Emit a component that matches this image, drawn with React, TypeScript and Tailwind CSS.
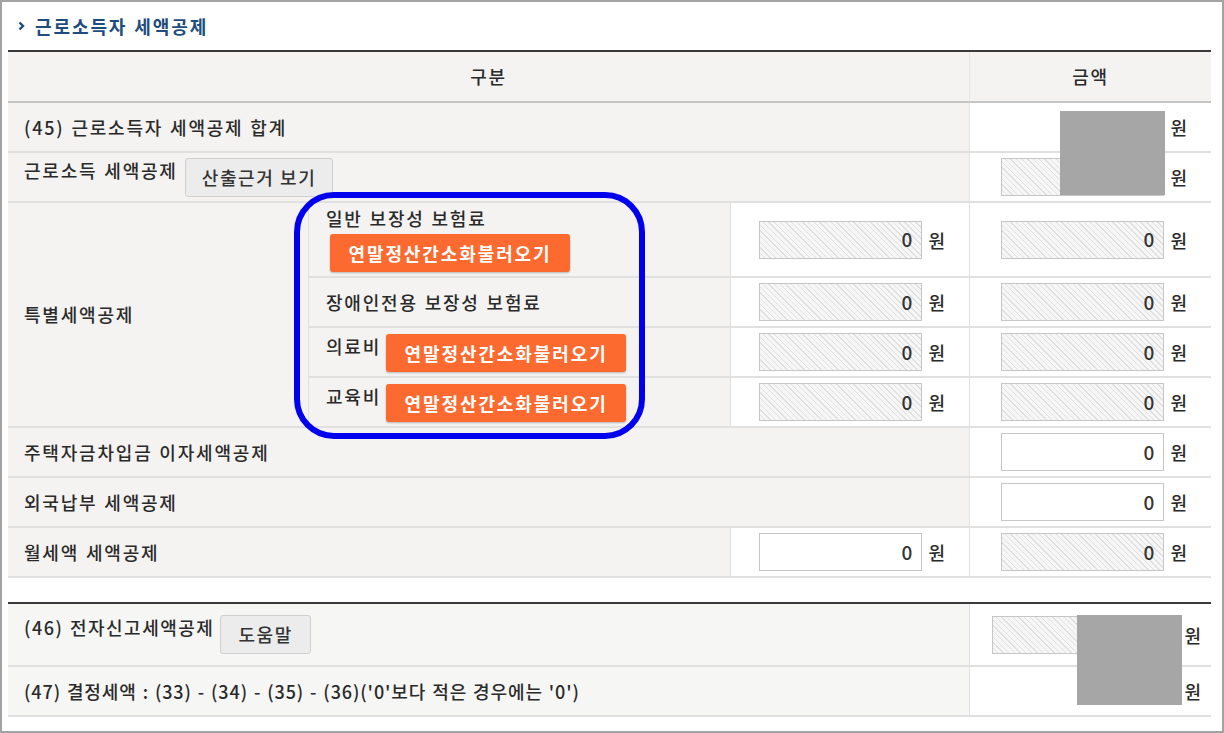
import React from "react";

const hatch =
  "bg-[image:repeating-linear-gradient(45deg,#f6f6f6_0px,#f6f6f6_3px,#e0e0e0_3px,#e0e0e0_4px)]";

function Amount({ hatched, value = "0", wide }: { hatched?: boolean; value?: string; wide?: boolean }) {
  return (
    <div
      className={`flex h-[38px] items-center justify-end border border-[#c6c6c6] pr-[9px] text-[19px] tracking-normal text-[#333] ${wide ? "w-[176px]" : "w-[163px]"} ${hatched ? hatch : "bg-white"}`}
    >
      {value}
    </div>
  );
}

function Won() {
  return <span className="text-[18px] leading-[24px] tracking-normal">원</span>;
}

function OrangeButton({ className = "" }: { className?: string }) {
  return (
    <button
      className={`flex h-[38px] w-[240px] shrink-0 items-center justify-center rounded-[3px] bg-[#fc6a2f] text-[18px] font-bold tracking-[1.9px] text-white shadow-[0_1px_2px_rgba(0,0,0,0.25)] ${className}`}
    >
      연말정산간소화불러오기
    </button>
  );
}

function GrayButton({ label, className = "" }: { label: string; className?: string }) {
  return (
    <button
      className={`flex h-[39px] shrink-0 items-center justify-center rounded-[3px] border border-[#cfcfcf] bg-[#ececec] px-[16px] text-[18px] tracking-[1.6px] text-[#333] ${className}`}
    >
      {label}
    </button>
  );
}

export default function App() {
  const label = "border-b-2 border-[#e0e0e0] bg-[#f4f3f1] pl-[16px]";
  const cell = "border-b-2 border-l border-[#e0e0e0]";
  const amountCell = "flex items-center justify-end gap-[6px] pr-[24px] bg-white";

  return (
    <div className="relative h-[733px] w-[1224px] overflow-hidden border-2 border-[#a3a3a3] bg-white font-['Noto_Sans_CJK_KR',sans-serif] text-[18px] font-medium tracking-[1.8px] text-[#2a2a2a] [word-spacing:1px]">
      {/* title */}
      <div className="flex h-[48px] items-center gap-[10px] pl-[16px]">
        <svg width="7" height="10" viewBox="0 0 7 10">
          <polyline points="1.5,1.5 5,5 1.5,8.5" fill="none" stroke="#1f4c7e" strokeWidth="2.4" />
        </svg>
        <h2 className="text-[18px] font-bold tracking-[1.9px] text-[#1f4c7e]">근로소득자 세액공제</h2>
      </div>

      <div className="ml-[6px] w-[1203px]">
        {/* main table */}
        <div className="grid grid-cols-[300px_422px_239px_242px] border-t-2 border-[#3a3a3a]">
          <div className="col-span-3 flex h-[51px] items-center justify-center border-b-2 border-[#c4c4c4] bg-[#f4f3f1]">
            구분
          </div>
          <div className="flex h-[51px] items-center justify-center border-b-2 border-l border-b-[#c4c4c4] border-l-[#e6e6e6] bg-[#f4f3f1]">
            금액
          </div>

          {/* (45) */}
          <div className={`col-span-3 flex h-[50px] items-center ${label}`}>(45) 근로소득자 세액공제 합계</div>
          <div className={`${cell} ${amountCell}`}>
            <Won />
          </div>

          {/* 근로소득 세액공제 */}
          <div className={`col-span-3 flex h-[50px] items-start pt-[5px] ${label}`}>
            <span className="leading-[24px]">근로소득 세액공제</span>
            <GrayButton label="산출근거 보기" className="ml-[7px]" />
          </div>
          <div className={`${cell} ${amountCell}`}>
            <Amount hatched value="" />
            <Won />
          </div>

          {/* 특별세액공제 */}
          <div className={`row-span-4 flex items-center ${label}`}>특별세액공제</div>

          <div className={`flex h-[75px] flex-col items-start bg-[#f4f3f1] pl-[17px] pt-[3px] ${cell}`}>
            <span className="leading-[24px]">일반 보장성 보험료</span>
            <OrangeButton className="ml-[4px] mt-[4px] h-[37px]" />
          </div>
          <div className={`h-[75px] ${cell} ${amountCell}`}>
            <Amount hatched />
            <Won />
          </div>
          <div className={`h-[75px] ${cell} ${amountCell}`}>
            <Amount hatched />
            <Won />
          </div>

          <div className={`flex h-[50px] items-center bg-[#f4f3f1] pl-[17px] ${cell}`}>장애인전용 보장성 보험료</div>
          <div className={`${cell} ${amountCell}`}>
            <Amount hatched />
            <Won />
          </div>
          <div className={`${cell} ${amountCell}`}>
            <Amount hatched />
            <Won />
          </div>

          <div className={`flex h-[50px] items-start bg-[#f4f3f1] pl-[17px] pt-[6px] ${cell}`}>
            <span className="leading-[24px]">의료비</span>
            <OrangeButton className="ml-[5px]" />
          </div>
          <div className={`${cell} ${amountCell}`}>
            <Amount hatched />
            <Won />
          </div>
          <div className={`${cell} ${amountCell}`}>
            <Amount hatched />
            <Won />
          </div>

          <div className={`flex h-[50px] items-start bg-[#f4f3f1] pl-[17px] pt-[6px] ${cell}`}>
            <span className="leading-[24px]">교육비</span>
            <OrangeButton className="ml-[5px]" />
          </div>
          <div className={`${cell} ${amountCell}`}>
            <Amount hatched />
            <Won />
          </div>
          <div className={`${cell} ${amountCell}`}>
            <Amount hatched />
            <Won />
          </div>

          {/* 주택자금 */}
          <div className={`col-span-3 flex h-[50px] items-center ${label}`}>주택자금차입금 이자세액공제</div>
          <div className={`${cell} ${amountCell}`}>
            <Amount />
            <Won />
          </div>

          {/* 외국납부 */}
          <div className={`col-span-3 flex h-[50px] items-center ${label}`}>외국납부 세액공제</div>
          <div className={`${cell} ${amountCell}`}>
            <Amount />
            <Won />
          </div>

          {/* 월세액 */}
          <div className={`col-span-2 flex h-[50px] items-center ${label}`}>월세액 세액공제</div>
          <div className={`${cell} ${amountCell}`}>
            <Amount />
            <Won />
          </div>
          <div className={`${cell} ${amountCell}`}>
            <Amount hatched />
            <Won />
          </div>
        </div>

        {/* (46), (47) */}
        <div className="mt-[24px] grid grid-cols-[961px_242px] border-t-2 border-[#3a3a3a]">
          <div className="flex h-[63px] items-start border-b-2 border-[#e0e0e0] bg-[#f6f6f5] pl-[16px] pt-[11px]">
            <span className="leading-[24px] tracking-[1.5px]">(46) 전자신고세액공제</span>
            <GrayButton label="도움말" className="ml-[6px] h-[38px] px-[17px]" />
          </div>
          <div className="flex items-center justify-end gap-[16px] border-b-2 border-l border-[#e0e0e0] bg-white pr-[10px]">
            <Amount hatched wide value="" />
            <Won />
          </div>
          <div className="flex h-[50px] items-center border-b-2 border-[#e0e0e0] bg-[#f6f6f5] pl-[16px] tracking-[0.9px]">
            (47) 결정세액 : (33) - (34) - (35) - (36)('0'보다 적은 경우에는 '0')
          </div>
          <div className="flex items-center justify-end border-b-2 border-l border-[#e0e0e0] bg-white pr-[10px]">
            <Won />
          </div>
        </div>
      </div>

      {/* redaction boxes */}
      <div className="absolute left-[1058px] top-[109px] h-[84px] w-[105px] bg-[#a6a6a6]" />
      <div className="absolute left-[1075px] top-[613px] h-[90px] w-[105px] bg-[#a6a6a6]" />

      {/* blue annotation */}
      <div className="pointer-events-none absolute left-[292px] top-[190px] h-[247px] w-[351px] rounded-[40px] border-[6px] border-[#0000ee]" />
    </div>
  );
}
